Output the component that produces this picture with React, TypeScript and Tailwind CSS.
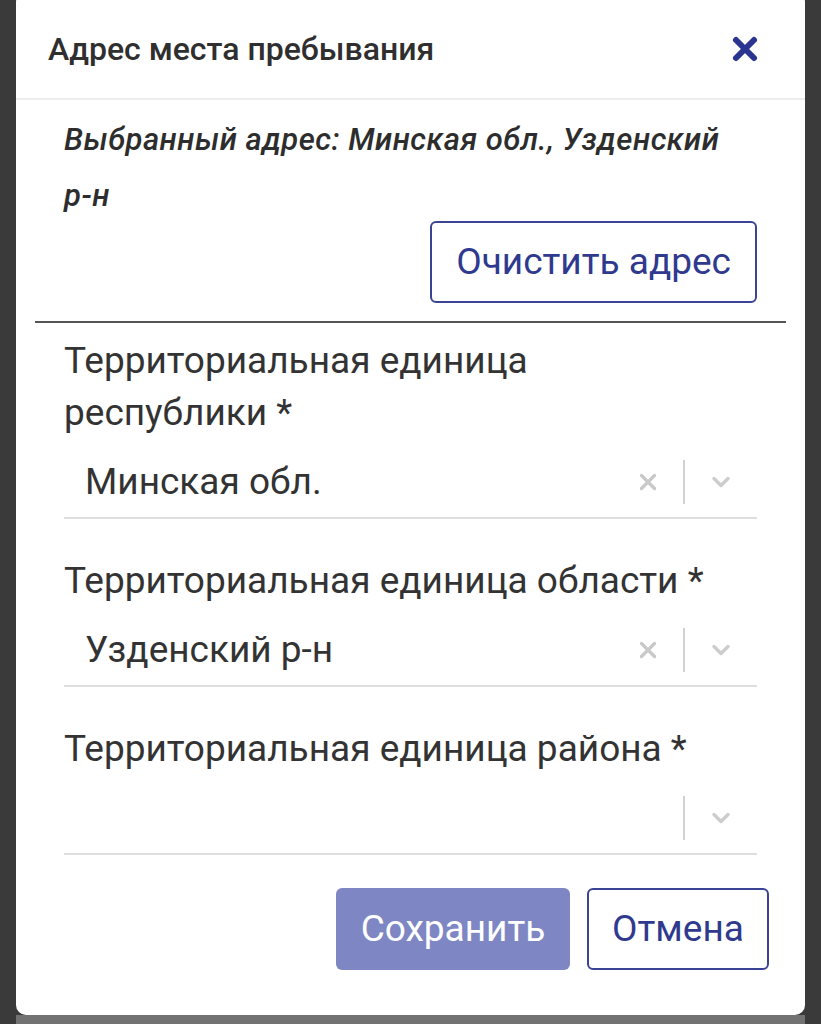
import { X, ChevronDown } from 'lucide-react';

const font = { fontFamily: 'Roboto, "Noto Sans", sans-serif' };

function SelectField({ label, value }: { label: string; value?: string }) {
  return (
    <div className="flex flex-col">
      <label className="text-[37px] leading-[52px] text-[#333333]">{`${label}\u00a0*`}</label>
      <div className="mt-[8px] flex h-[72px] items-center border-b-2 border-[#dedede]">
        <span className="flex-1 pl-[21px] text-[37px] text-[#333333]">{value}</span>
        {value && <X className="mr-[22px] h-[26px] w-[26px] text-[#c8c8c8]" strokeWidth={3} />}
        <div className="h-[44px] w-[2px] bg-[#d2d2d2]" />
        <ChevronDown className="mx-[22px] h-[28px] w-[28px] text-[#cdcdcd]" strokeWidth={3} />
      </div>
    </div>
  );
}

export default function App() {
  return (
    <div className="flex h-[1024px] flex-col overflow-hidden bg-[#3a3a3a]" style={font}>
      <div className="mx-[16px] -mt-[8px] flex h-[1023px] shrink-0 flex-col rounded-[10px] bg-white">
        {/* шапка */}
        <div className="flex h-[108px] items-center justify-between border-b-2 border-[#ececec] pl-[32px] pr-[42px] pt-[8px]">
          <h2 className="text-[32px] font-medium text-[#2f2f2f]">Адрес места пребывания</h2>
          <X className="h-[36px] w-[36px] text-[#2a3592]" strokeWidth={4} />
        </div>
        <div className="px-[48px] pt-[12px]">
          <p className="max-w-[680px] text-[31px] font-medium italic leading-[56px] tracking-[0.5px] text-[#2d2d2d]">
            Выбранный адрес: Минская обл., Узденский р-н
          </p>
          <div className="-mt-[3px] flex justify-end">
            <button className="h-[82px] rounded-[6px] border-2 border-[#3b4494] px-[24px] text-[37px] text-[#2f3a8f]">
              Очистить адрес
            </button>
          </div>
        </div>
        <div className="mx-[19px] mt-[18px] h-[2px] shrink-0 bg-[#555555]" />
        <div className="flex flex-col gap-[36px] px-[48px] pt-[12px]">
          <SelectField label="Территориальная единица республики" value="Минская обл." />
          <SelectField label="Территориальная единица области" value="Узденский р-н" />
          <SelectField label="Территориальная единица района" />
        </div>
        <div className="mt-[33px] flex justify-end gap-[17px] px-[36px]">
          <button className="h-[82px] w-[234px] rounded-[6px] bg-[#7e87c3] text-[37px] text-white">Сохранить</button>
          <button className="h-[82px] w-[182px] rounded-[6px] border-2 border-[#3b4494] text-[37px] text-[#2f3a8f]">
            Отмена
          </button>
        </div>
      </div>
      <div className="mx-[16px] h-[20px] bg-[#727272]" />
    </div>
  );
}
